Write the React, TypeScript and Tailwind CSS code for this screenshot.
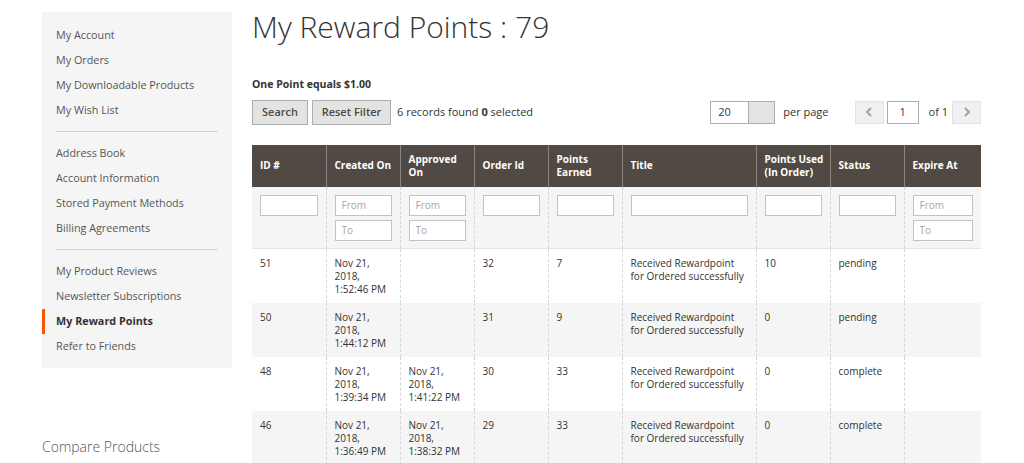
const sideGroups = [
  ['My Account', 'My Orders', 'My Downloadable Products', 'My Wish List'],
  ['Address Book', 'Account Information', 'Stored Payment Methods', 'Billing Agreements'],
  ['My Product Reviews', 'Newsletter Subscriptions', 'My Reward Points', 'Refer to Friends'],
];

const columns = [
  { label: 'ID #', w: 'w-[74px]', filter: 'text' },
  { label: 'Created On', w: 'w-[74px]', filter: 'range' },
  { label: 'Approved On', w: 'w-[74px]', filter: 'range' },
  { label: 'Order Id', w: 'w-[74px]', filter: 'text' },
  { label: 'Points Earned', w: 'w-[74px]', filter: 'text' },
  { label: 'Title', w: 'w-[134px]', filter: 'text' },
  { label: 'Points Used (In Order)', w: 'w-[74px]', filter: 'text' },
  { label: 'Status', w: 'w-[74px]', filter: 'text' },
  { label: 'Expire At', w: 'w-[77px]', filter: 'range' },
];

const rows = [
  ['51', 'Nov 21, 2018, 1:52:46 PM', '', '32', '7', 'Received Rewardpoint for Ordered successfully', '10', 'pending', ''],
  ['50', 'Nov 21, 2018, 1:44:12 PM', '', '31', '9', 'Received Rewardpoint for Ordered successfully', '0', 'pending', ''],
  ['48', 'Nov 21, 2018, 1:39:34 PM', 'Nov 21, 2018, 1:41:22 PM', '30', '33', 'Received Rewardpoint for Ordered successfully', '0', 'complete', ''],
  ['46', 'Nov 21, 2018, 1:36:49 PM', 'Nov 21, 2018, 1:38:32 PM', '29', '33', 'Received Rewardpoint for Ordered successfully', '0', 'complete', ''],
];

function FilterInput({ placeholder }: { placeholder?: string }) {
  return (
    <input
      placeholder={placeholder}
      className="block w-full h-[21px] border border-[#c2c2c2] bg-white px-[6px] text-[10px] text-[#333] placeholder:text-[#a6a6a6] outline-none"
    />
  );
}

function Cell({ text, i }: { text: string; i: number }) {
  const parts = i === 1 || i === 2 ? text.split(', ').map((p, k, a) => (k < a.length - 1 ? p + ',' : p)) : [text];
  return (
    <td className={`${columns[i].w} align-top px-[8px] pt-[8px] border-l border-dashed border-[#d6d6d6] first:border-l-0`}>
      {parts.map((p, k) => (
        <div key={k}>{p}</div>
      ))}
    </td>
  );
}

export default function App() {
  return (
    <div className="w-[1024px] h-[463px] overflow-hidden bg-white text-[#333]" style={{ fontFamily: '"Open Sans", sans-serif' }}>
      <div className="flex gap-[20px] pl-[42px] pt-[12px]">
        <aside className="w-[190px] shrink-0">
          <div className="bg-[#f5f5f5] pt-[11px] h-[356px]">
            {sideGroups.map((g, gi) => (
              <div key={gi}>
                {gi > 0 && <div className="mx-[14px] mt-[8px] mb-[9px] border-t border-[#d1d1d1]" />}
                {g.map((item) => {
                  const active = item === 'My Reward Points';
                  return (
                    <div
                      key={item}
                      className={`h-[25px] flex items-center text-[10.8px] ${
                        active ? 'border-l-[3px] border-[#ff5501] pl-[11px] font-bold text-[#333]' : 'pl-[14px] text-[#555]'
                      }`}
                    >
                      {item}
                    </div>
                  );
                })}
              </div>
            ))}
          </div>
          <div className="mt-[68px] text-[14px] font-light text-[#555]">Compare Products</div>
        </aside>

        <main className="w-[729px]">
          <h1 className="-mt-[3px] text-[30px] font-light leading-[36px] text-[#333]">My Reward Points : 79</h1>
          <div className="mt-[32px] text-[10.5px] font-bold">One Point equals $1.00</div>
          <div className="mt-[7px] flex items-center h-[25px]">
            <button className="h-[25px] w-[56px] bg-[#e3e3e3] border border-[#adadad] text-[11px] font-semibold text-[#514943]">
              Search
            </button>
            <button className="ml-[4px] h-[25px] w-[79px] bg-[#e3e3e3] border border-[#adadad] text-[11px] font-semibold text-[#514943]">
              Reset Filter
            </button>
            <span className="ml-[6px] text-[11px] text-[#333]">
              6 records found <b>0</b> selected
            </span>
            <div className="ml-auto flex items-center">
              <div className="flex h-[23px] border border-[#adadad]">
                <div className="w-[38px] bg-white text-[11px] flex items-center pl-[7px] border-r border-[#adadad]">20</div>
                <div className="w-[25px] bg-[#e3e3e3]" />
              </div>
              <span className="ml-[8px] text-[11px]">per page</span>
              <button className="ml-[26px] w-[29px] h-[23px] bg-[#f0f0f0] border border-[#e3e3e3] flex items-center justify-center">
                <svg width="8" height="10" viewBox="0 0 8 10">
                  <path d="M6 1 L2 5 L6 9" fill="none" stroke="#a3a3a3" strokeWidth="2" />
                </svg>
              </button>
              <div className="ml-[3px] w-[32px] h-[23px] border border-[#adadad] flex items-center justify-center text-[11px]">1</div>
              <span className="ml-[10px] text-[11px]">of 1</span>
              <button className="ml-[4px] w-[29px] h-[23px] bg-[#f0f0f0] border border-[#e3e3e3] flex items-center justify-center">
                <svg width="8" height="10" viewBox="0 0 8 10">
                  <path d="M2 1 L6 5 L2 9" fill="none" stroke="#a3a3a3" strokeWidth="2" />
                </svg>
              </button>
            </div>
          </div>

          <table className="mt-[20px] w-[729px] table-fixed border-collapse text-[10px] leading-[13px]">
            <thead>
              <tr className="bg-[#514943] text-white h-[42px]">
                {columns.map((c) => (
                  <th
                    key={c.label}
                    className={`${c.w} text-left font-bold px-[8px] align-middle whitespace-nowrap border-l border-[#8a837f] first:border-l-0`}
                  >
                    {c.label === 'Points Used (In Order)' ? (
                      <>
                        Points Used
                        <br />
                        (In Order)
                      </>
                    ) : c.label === 'Approved On' ? (
                      <>
                        Approved
                        <br />
                        On
                      </>
                    ) : c.label === 'Points Earned' ? (
                      <>
                        Points
                        <br />
                        Earned
                      </>
                    ) : (
                      c.label
                    )}
                  </th>
                ))}
              </tr>
            </thead>
            <tbody>
              <tr className="bg-[#f5f5f5] h-[62px] border-b border-[#e3e3e3]">
                {columns.map((c) => (
                  <td key={c.label} className="align-top px-[8px] pt-[8px] border-l border-dashed border-[#d6d6d6] first:border-l-0">
                    {c.filter === 'range' ? (
                      <div className="flex flex-col gap-[4px]">
                        <FilterInput placeholder="From" />
                        <FilterInput placeholder="To" />
                      </div>
                    ) : (
                      <FilterInput />
                    )}
                  </td>
                ))}
              </tr>
              {rows.map((r, ri) => (
                <tr key={ri} className={`h-[54px] ${ri % 2 ? 'bg-[#f5f5f5]' : 'bg-white'}`}>
                  {r.map((v, i) => (
                    <Cell key={i} text={v} i={i} />
                  ))}
                </tr>
              ))}
            </tbody>
          </table>
        </main>
      </div>
    </div>
  );
}
